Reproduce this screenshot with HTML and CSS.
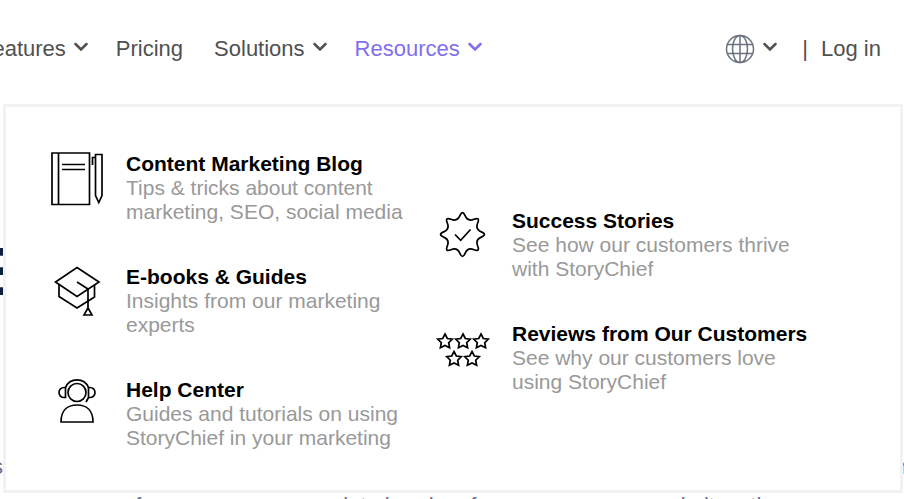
FILE: index.html
```html
<!DOCTYPE html>
<html lang="en">
<head>
    <meta charset="UTF-8">
    <meta name="viewport" content="width=device-width, initial-scale=1.0">
    <title>StoryChief</title>
    <link rel="stylesheet" href="styles.css">
</head>
<body>
    <header class="header">
        <nav class="nav">
            <button type="button" class="nav-link">Features
                <svg class="chevron" viewBox="0 0 14 10"><path d="M1.500 2l5.500 5.500L12.500 2"/></svg>
            </button>
            <a href="#" class="nav-link nav-link-plain">Pricing</a>
            <button type="button" class="nav-link">Solutions
                <svg class="chevron" viewBox="0 0 14 10"><path d="M1.500 2l5.500 5.500L12.500 2"/></svg>
            </button>
            <button type="button" class="nav-link active" aria-expanded="true">Resources
                <svg class="chevron" viewBox="0 0 14 10"><path d="M1.500 2l5.500 5.500L12.500 2"/></svg>
            </button>
        </nav>
        <div class="account">
            <button type="button" class="nav-link" aria-label="Language">
                <svg class="globe" viewBox="0 0 30 30">
                    <circle cx="15" cy="15" r="13.500"/>
                    <ellipse cx="15" cy="15" rx="7.500" ry="13.500"/>
                    <path d="M15 1.500v27M2.500 10.500h25M2.500 19.500h25"/>
                </svg>
                <svg class="chevron" viewBox="0 0 14 10"><path d="M1.500 2l5.500 5.500L12.500 2"/></svg>
            </button>
            <span class="divider">|</span>
            <a href="#" class="nav-link">Log in</a>
        </div>

        <div class="menu">
            <div class="menu-column">
                <a href="#" class="menu-item">
                    <svg class="menu-icon" viewBox="0 0 64 56">
                        <path d="M7 1h37.500v51.500H7zM13.500 1v51.500M17 12.500h23M17 17.500h23"/>
                        <path d="M50.500 2.500H57v41l-3.200 7-3.300-7zM50.500 5.500h-3V13"/>
                    </svg>
                    <span class="menu-text">
                        <strong>Content Marketing Blog</strong>
                        <span>Tips &amp; tricks about content marketing, SEO, social media</span>
                    </span>
                </a>
                <a href="#" class="menu-item">
                    <svg class="menu-icon" viewBox="0 0 64 56">
                        <path d="M32 2.500L54 17 32 31.500 10.500 17z"/>
                        <path d="M14 19.500v12L32 43l17.500-11V20"/>
                        <path d="M32 17l11 7v19l-4 7h8l-4-7"/>
                    </svg>
                    <span class="menu-text">
                        <strong>E-books &amp; Guides</strong>
                        <span>Insights from our marketing experts</span>
                    </span>
                </a>
                <a href="#" class="menu-item">
                    <svg class="menu-icon" viewBox="0 0 64 56">
                        <circle cx="32" cy="14.500" r="9"/>
                        <path d="M20.500 9.500A12.500 12.500 0 0 1 43.500 9.500"/>
                        <path d="M20.500 9.500h-1.500a5 5 0 0 0 0 10h1.500zM43.500 9.500H45a5 5 0 0 1 0 10h-1.500zM43.500 19.500L41 24"/>
                        <path d="M16 44C16 33 22 27 32 27s16 6 16 17z"/>
                    </svg>
                    <span class="menu-text">
                        <strong>Help Center</strong>
                        <span>Guides and tutorials on using StoryChief in your marketing</span>
                    </span>
                </a>
            </div>
            <div class="menu-column">
                <a href="#" class="menu-item">
                    <svg class="menu-icon" viewBox="0 0 64 56">
                        <g transform="translate(31.500 25.500)">
                            <path d="M18.800-2.600Q25 0 18.800 2.600 12.600 5.200 15.200 11.500 17.700 17.700 11.500 15.200 5.200 12.600 2.600 18.800 0 25-2.600 18.800-5.200 12.600-11.500 15.200-17.700 17.700-15.200 11.500-12.600 5.200-18.800 2.600-25 0-18.800-2.600-12.600-5.200-15.200-11.500-17.700-17.700-11.500-15.200-5.200-12.600-2.600-18.800 0-25 2.600-18.800 5.200-12.600 11.500-15.200 17.700-17.700 15.200-11.500 12.600-5.200 18.800-2.600z"/>
                            <path d="M-7.500 0l5.700 5.800L8-5"/>
                        </g>
                    </svg>
                    <span class="menu-text">
                        <strong>Success Stories</strong>
                        <span>See how our customers thrive with StoryChief</span>
                    </span>
                </a>
                <a href="#" class="menu-item">
                    <svg class="menu-icon" viewBox="0 0 64 56">
                        <defs>
                            <path id="star" d="M0-7.500L2.300-3 7.300-2.300 3.700 1.200 4.600 6.300 0 4-4.600 6.300-3.700 1.200-7.300-2.300-2.300-3z"/>
                        </defs>
                        <use href="#star" x="14" y="19.500"/>
                        <use href="#star" x="32" y="19.500"/>
                        <use href="#star" x="50" y="19.500"/>
                        <use href="#star" x="23" y="37"/>
                        <use href="#star" x="41" y="37"/>
                    </svg>
                    <span class="menu-text">
                        <strong>Reviews from Our Customers</strong>
                        <span>See why our customers love using StoryChief</span>
                    </span>
                </a>
            </div>
        </div>
    </header>

    <main class="hero">
        <h1>E</h1>
        <p class="hero-line"><span>s</span><span>n</span></p>
        <p class="hero-line centered">of our numerous complete headers for numerous new websites, the</p>
    </main>
</body>
</html>
```

FILE: styles.css
```css
* {
    margin: 0;
    padding: 0;
    box-sizing: border-box;
}

body {
    font-family: "Liberation Sans", Arial, sans-serif;
    background: #fff;
    height: 100vh;
    overflow: hidden;
}

a {
    color: inherit;
    text-decoration: none;
}

svg {
    fill: none;
    stroke: currentColor;
    flex-shrink: 0;
}

.header {
    position: relative;
    display: flex;
    justify-content: space-between;
    padding: 34px 23px 40px 0;
    color: #505050;
    font-size: 22px;
    line-height: 26px;
}

.nav {
    display: flex;
    gap: 28px;
    margin-left: -21px;
}

.nav-link {
    display: flex;
    align-items: center;
    gap: 8px;
    border: none;
    background: none;
    color: inherit;
    font: inherit;
    cursor: pointer;
    white-space: nowrap;
}

.nav-link-plain {
    padding-right: 3px;
}

.nav-link.active {
    color: #7f6ff0;
}

.chevron {
    width: 14px;
    height: 10px;
    margin-bottom: 4px;
    stroke-width: 2.5;
    stroke-linecap: round;
}

.account {
    display: flex;
    align-items: center;
}

.globe {
    width: 30px;
    height: 30px;
    color: #69727d;
    stroke-width: 1.5;
}

.divider {
    padding: 0 13px 0 25px;
}

/* Resources dropdown */
.menu {
    position: absolute;
    top: 100%;
    left: 3px;
    right: 1px;
    z-index: 10;
    display: flex;
    align-items: center;
    gap: 15px;
    padding: 45px 39px 40px;
    background: #fff;
    border: 3px solid #f2f2f2;
}

.menu-column {
    display: flex;
    flex-direction: column;
    gap: 41px;
}

.menu-item {
    display: flex;
    align-items: flex-start;
    gap: 17px;
    color: #000;
    font-size: 21px;
    line-height: 24px;
}

.menu-icon {
    width: 64px;
    height: 56px;
    stroke-width: 1.7;
}

.menu-text {
    width: 290px;
    color: #999;
}

.menu-text strong {
    display: block;
    color: #000;
    white-space: nowrap;
}

/* Page behind the dropdown */
.hero {
    margin: 0 -8px;
    padding-top: 128px;
    color: #6b6b8d;
    font-size: 22px;
    line-height: 39px;
}

.hero h1 {
    margin: 0 0 137px -27px;
    color: #0b1f3f;
    font-size: 68px;
    line-height: 78px;
}

.hero-line {
    display: flex;
    justify-content: space-between;
    white-space: nowrap;
}

.hero-line.centered {
    justify-content: center;
}
```
